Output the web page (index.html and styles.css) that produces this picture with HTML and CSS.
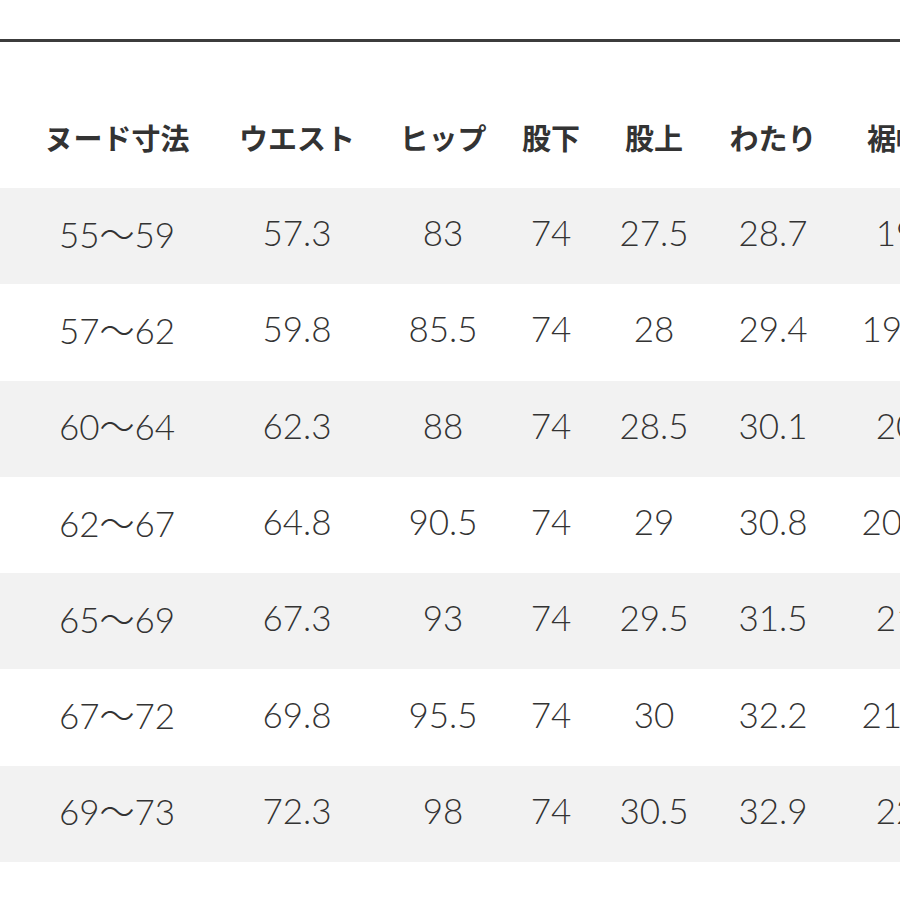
FILE: index.html
```html
<!DOCTYPE html>
<html lang="ja">
<head>
<meta charset="utf-8">
<title>サイズ表</title>
<link rel="stylesheet" href="styles.css">
</head>
<body>
<div class="page">
  <div class="rule"></div>
  <div class="table">
    <div class="row head">
      <div class="cell"></div>
      <div class="cell">ヌード寸法</div>
      <div class="cell">ウエスト</div>
      <div class="cell">ヒップ</div>
      <div class="cell">股下</div>
      <div class="cell">股上</div>
      <div class="cell">わたり</div>
      <div class="cell">裾幅</div>
    </div>
    <div class="row alt">
      <div class="cell">58</div><div class="cell">55～59</div><div class="cell">57.3</div><div class="cell">83</div><div class="cell">74</div><div class="cell">27.5</div><div class="cell">28.7</div><div class="cell">19</div>
    </div>
    <div class="row">
      <div class="cell">61</div><div class="cell">57～62</div><div class="cell">59.8</div><div class="cell">85.5</div><div class="cell">74</div><div class="cell">28</div><div class="cell">29.4</div><div class="cell">19.5</div>
    </div>
    <div class="row alt">
      <div class="cell">63</div><div class="cell">60～64</div><div class="cell">62.3</div><div class="cell">88</div><div class="cell">74</div><div class="cell">28.5</div><div class="cell">30.1</div><div class="cell">20</div>
    </div>
    <div class="row">
      <div class="cell">66</div><div class="cell">62～67</div><div class="cell">64.8</div><div class="cell">90.5</div><div class="cell">74</div><div class="cell">29</div><div class="cell">30.8</div><div class="cell">20.5</div>
    </div>
    <div class="row alt">
      <div class="cell">68</div><div class="cell">65～69</div><div class="cell">67.3</div><div class="cell">93</div><div class="cell">74</div><div class="cell">29.5</div><div class="cell">31.5</div><div class="cell">21</div>
    </div>
    <div class="row">
      <div class="cell">70</div><div class="cell">67～72</div><div class="cell">69.8</div><div class="cell">95.5</div><div class="cell">74</div><div class="cell">30</div><div class="cell">32.2</div><div class="cell">21.5</div>
    </div>
    <div class="row alt">
      <div class="cell">73</div><div class="cell">69～73</div><div class="cell">72.3</div><div class="cell">98</div><div class="cell">74</div><div class="cell">30.5</div><div class="cell">32.9</div><div class="cell">22</div>
    </div>
  </div>
</div>
</body>
</html>
```

FILE: styles.css
```css
html, body {
  margin: 0;
  padding: 0;
  background: #ffffff;
}
body {
  width: 900px;
  height: 900px;
  overflow: hidden;
}
.page {
  padding-top: 39px;
}
.rule {
  height: 3px;
  background: #3c3c3c;
}
.table {
  margin-left: -66px;
  width: 1020px;
}
.row {
  display: grid;
  grid-template-columns: 90px 186px 174px 118px 98px 108px 130px 116px;
  height: 96.3px;
  align-items: center;
  color: #333333;
  font-family: "Lato", "Noto Sans CJK JP", sans-serif;
  font-weight: 300;
  font-size: 35px;
  box-sizing: border-box;
  padding-bottom: 8px;
}
.row.alt {
  background: #f2f2f2;
}
.cell {
  text-align: center;
  white-space: nowrap;
}
.row.head {
  height: 146px;
  align-items: start;
  padding-top: 80px;
  padding-bottom: 0;
  font-family: "Noto Sans CJK JP", sans-serif;
  font-weight: 700;
  font-size: 29px;
  line-height: 30px;
  color: #333333;
}
```
